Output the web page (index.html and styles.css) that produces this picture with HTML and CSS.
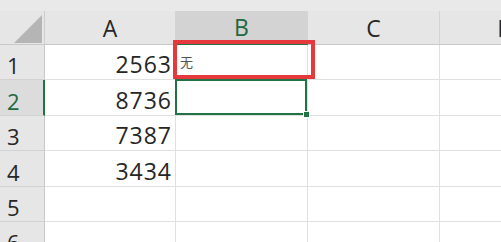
FILE: index.html
```html
<!DOCTYPE html>
<html lang="zh">
    <head>
        <meta charset="UTF-8">
        <title>Sheet</title>
        <link rel="stylesheet" href="styles.css">
    </head>
    <body>
        <div class="topbar"></div>

        <div class="sheet">
            <div class="corner"><span class="tri"></span></div>
            <div class="colhead">A</div>
            <div class="colhead sel">B</div>
            <div class="colhead">C</div>
            <div class="colhead">D</div>

            <div class="rowhead">1</div>
            <div class="cell num">2563</div>
            <div class="cell text marked">无</div>
            <div class="cell"></div>
            <div class="cell"></div>

            <div class="rowhead sel">2</div>
            <div class="cell num">8736</div>
            <div class="cell active"></div>
            <div class="cell"></div>
            <div class="cell"></div>

            <div class="rowhead">3</div>
            <div class="cell num">7387</div>
            <div class="cell"></div>
            <div class="cell"></div>
            <div class="cell"></div>

            <div class="rowhead">4</div>
            <div class="cell num">3434</div>
            <div class="cell"></div>
            <div class="cell"></div>
            <div class="cell"></div>

            <div class="rowhead">5</div>
            <div class="cell"></div>
            <div class="cell"></div>
            <div class="cell"></div>
            <div class="cell"></div>

            <div class="rowhead">6</div>
            <div class="cell"></div>
            <div class="cell"></div>
            <div class="cell"></div>
            <div class="cell"></div>
        </div>
    </body>
</html>
```

FILE: styles.css
```css
body {
    margin: 0;
    width: 501px;
    height: 242px;
    overflow: hidden;
    background-color: #ffffff;
    font-family: "Open Sans", "Noto Sans CJK SC", sans-serif;
    color: #262626;
}

.topbar {
    height: 11px;
    background-color: #e9e9e9;
}

.sheet {
    display: grid;
    grid-template-columns: 45px 131px 132px 132px 132px;
    grid-template-rows: 34px;
    grid-auto-rows: 35.4px;
    width: 572px;
}

.corner,
.colhead,
.rowhead,
.cell {
    box-sizing: border-box;
    border-right: 1px solid #e0e0e0;
    border-bottom: 1px solid #e0e0e0;
}

.corner {
    position: relative;
    background-color: #e6e6e6;
    border-right-color: #cdcdcd;
    border-bottom-color: #c9c9c9;
}

.tri {
    position: absolute;
    left: 14px;
    top: 4px;
    width: 28px;
    height: 28px;
    background-color: #b5b5b5;
    clip-path: polygon(100% 0, 100% 100%, 0 100%);
}

.colhead {
    display: flex;
    justify-content: center;
    align-items: center;
    font-size: 23px;
    background-color: #e6e6e6;
    border-right-color: #d4d4d4;
    border-bottom-color: #c9c9c9;
}

.colhead.sel {
    background-color: #d3d3d3;
    color: #21683f;
    border-bottom: 2px solid #217346;
}

.rowhead {
    display: flex;
    align-items: flex-end;
    padding: 0 0 3px 7px;
    font-size: 22px;
    line-height: 1;
    background-color: #e6e6e6;
    border-right-color: #c9c9c9;
    border-bottom-color: #d2d2d2;
}

.rowhead.sel {
    background-color: #dcdcdc;
    color: #21683f;
    border-right: 2px solid #217346;
}

.cell {
    display: flex;
    align-items: flex-end;
    font-size: 23px;
    line-height: 1;
}

.num {
    justify-content: flex-end;
    padding: 0 3px 3px 0;
    letter-spacing: 1px;
}

.text {
    align-items: center;
    padding-left: 4px;
    font-size: 13px;
    color: #555555;
}

.marked {
    position: relative;
}

.marked::after {
    content: "";
    position: absolute;
    top: -5px;
    left: -3px;
    right: -8px;
    bottom: 0;
    border: 4px solid #e5393d;
    z-index: 3;
}

.active {
    position: relative;
}

.active::before {
    content: "";
    position: absolute;
    top: -1px;
    left: -1px;
    right: 0;
    bottom: 0;
    border: 2px solid #217346;
    z-index: 2;
}

.active::after {
    content: "";
    position: absolute;
    right: -3px;
    bottom: -3px;
    width: 5px;
    height: 5px;
    background-color: #217346;
    border: 1px solid #ffffff;
    z-index: 2;
}
```
